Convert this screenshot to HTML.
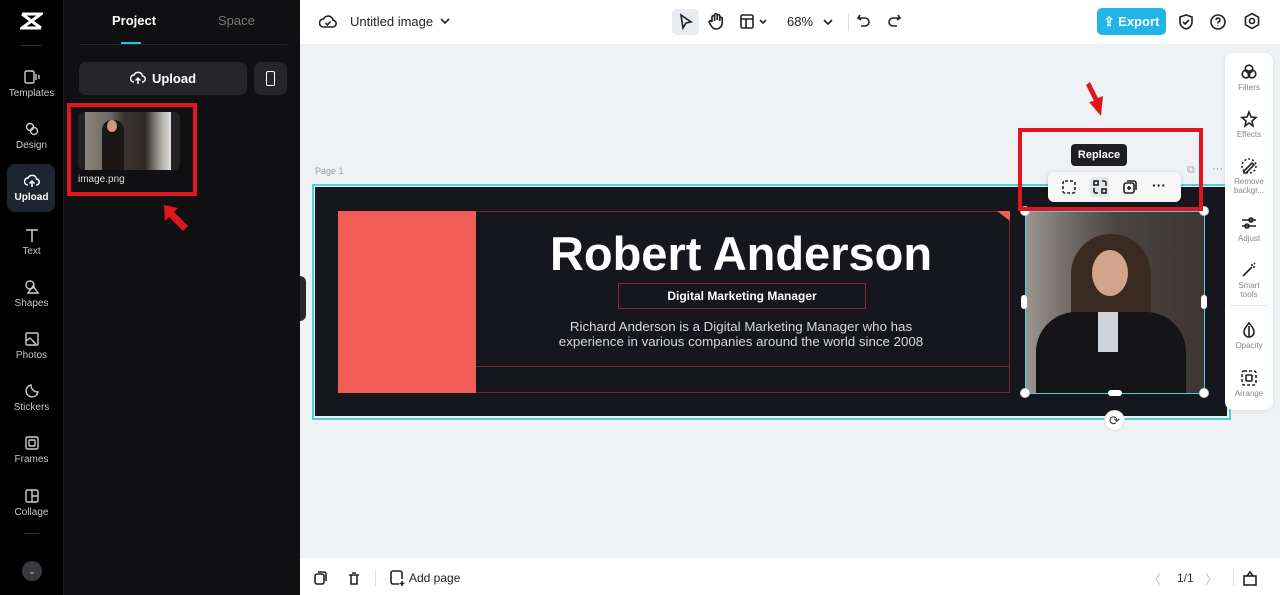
<!DOCTYPE html>
<html><head><meta charset="utf-8"><style>
*{margin:0;padding:0;box-sizing:border-box}
body{width:1280px;height:595px;overflow:hidden;background:#eff2f5;font-family:"Liberation Sans",sans-serif;position:relative}
.abs{position:absolute}
.nav{left:0;top:0;width:63px;height:595px;background:#000}
.nv{position:absolute;left:0;width:63px;text-align:center;color:#c8c8cc;font-size:10px}
.nv svg{display:block;margin:0 auto 3px}
.panel{left:63px;top:0;width:237px;height:595px;background:#101012;border-left:1px solid #1c1c1e}
.top{left:300px;top:0;width:980px;height:44px;background:#fff}
.bot{left:300px;top:558px;width:980px;height:37px;background:#fff}
.ic{stroke:#222;fill:none;stroke-width:1.6}
.rp{left:1225px;top:53px;width:48px;height:357px;background:#fff;border-radius:8px;box-shadow:0 1px 4px rgba(0,0,0,.08)}
.rp .it{position:absolute;left:0;width:48px;text-align:center;font-size:8px;color:#888;line-height:9px}
.rp svg{display:block;margin:0 auto 2px}
</style></head><body>
<div class="abs nav">
 <svg class="abs" style="left:20px;top:12px" width="23" height="18" viewBox="0 0 23 18"><path d="M2 2h19L2 16h19M2 2l19 14" stroke="#fff" stroke-width="3" fill="none"/></svg>
 <div class="abs" style="left:21px;top:45px;width:21px;height:1px;background:#333"></div>
 <div class="nv" style="top:69px"><svg width="16" height="16" viewBox="0 0 16 16"><rect x="1" y="2" width="9" height="12" rx="1.5" stroke="#ccc" fill="none" stroke-width="1.4"/><path d="M12 5v6M15 6v4" stroke="#ccc" stroke-width="1.4"/></svg>Templates</div>
 <div class="nv" style="top:121px"><svg width="16" height="16" viewBox="0 0 16 16"><circle cx="6" cy="6" r="3.5" stroke="#ccc" fill="none" stroke-width="1.4"/><circle cx="10" cy="10" r="3.5" stroke="#ccc" fill="none" stroke-width="1.4"/></svg>Design</div>
 <div class="abs" style="left:7px;top:164px;width:48px;height:48px;background:#1d2530;border-radius:8px"></div>
 <div class="nv" style="top:173px;color:#fff;font-weight:bold"><svg width="16" height="16" viewBox="0 0 16 16"><path d="M4 12a3.5 3.5 0 0 1 0-7 4.5 4.5 0 0 1 8.5 1A3 3 0 0 1 12 12M8 14V8M5.5 10.5 8 8l2.5 2.5" stroke="#fff" fill="none" stroke-width="1.5"/></svg>Upload</div>
 <div class="nv" style="top:227px"><svg width="16" height="16" viewBox="0 0 16 16"><path d="M2 3h12M8 3v12" stroke="#ccc" stroke-width="1.5"/></svg>Text</div>
 <div class="nv" style="top:279px"><svg width="16" height="16" viewBox="0 0 16 16"><circle cx="6" cy="6" r="4" stroke="#ccc" fill="none" stroke-width="1.4"/><path d="M9 7l5 7H4z" stroke="#ccc" fill="none" stroke-width="1.4"/></svg>Shapes</div>
 <div class="nv" style="top:331px"><svg width="16" height="16" viewBox="0 0 16 16"><rect x="2" y="2" width="12" height="12" rx="1" stroke="#ccc" fill="none" stroke-width="1.4"/><path d="M2 10l4-3 6 6" stroke="#ccc" fill="none" stroke-width="1.3"/></svg>Photos</div>
 <div class="nv" style="top:383px"><svg width="16" height="16" viewBox="0 0 16 16"><path d="M14 9A6 6 0 1 1 7 2c0 4 3 7 7 7z" stroke="#ccc" fill="none" stroke-width="1.4"/></svg>Stickers</div>
 <div class="nv" style="top:435px"><svg width="16" height="16" viewBox="0 0 16 16"><rect x="2" y="2" width="12" height="12" rx="1.5" stroke="#ccc" fill="none" stroke-width="1.4"/><rect x="5" y="5" width="6" height="6" rx="1" stroke="#ccc" fill="none" stroke-width="1.4"/></svg>Frames</div>
 <div class="nv" style="top:488px"><svg width="16" height="16" viewBox="0 0 16 16"><rect x="2" y="2" width="12" height="12" rx="1.5" stroke="#ccc" fill="none" stroke-width="1.4"/><path d="M8 2v12M8 8h6" stroke="#ccc" stroke-width="1.4"/></svg>Collage</div>
 <div class="abs" style="left:24px;top:533px;width:15px;height:1px;background:#333"></div>
 <div class="abs" style="left:22px;top:561px;width:20px;height:20px;border-radius:50%;background:#3a3a3e;color:#ccc;font-size:9px;text-align:center;line-height:20px">⌄</div>
</div>
<div class="abs panel">
 <div class="abs" style="left:48px;top:13px;color:#fff;font-weight:bold;font-size:13px">Project</div>
 <div class="abs" style="left:154px;top:13px;color:#777;font-size:13px">Space</div>
 <div class="abs" style="left:57px;top:42px;width:20px;height:2px;background:#22c6da"></div>
 <div class="abs" style="left:15px;top:44px;width:208px;height:1px;background:#26262a"></div>
 <div class="abs" style="left:15px;top:62px;width:168px;height:33px;background:#26262a;border-radius:7px;color:#fff;font-weight:bold;font-size:13px;text-align:center;line-height:33px"><svg style="vertical-align:-3px;margin-right:6px" width="16" height="16" viewBox="0 0 16 16"><path d="M4 12a3.5 3.5 0 0 1 0-7 4.5 4.5 0 0 1 8.5 1A3 3 0 0 1 12 12M8 14V8M5.5 10.5 8 8l2.5 2.5" stroke="#fff" fill="none" stroke-width="1.5"/></svg>Upload</div>
 <div class="abs" style="left:190px;top:62px;width:33px;height:33px;background:#26262a;border-radius:7px"><div class="abs" style="left:12px;top:9px;width:9px;height:15px;border:1.5px solid #fff;border-radius:2px"></div></div>
 <div class="abs" style="left:14px;top:112px;width:102px;height:58px;background:#222;border-radius:6px;overflow:hidden">
  <div class="abs" style="left:7px;top:0;width:86px;height:58px;background:linear-gradient(90deg,#8a8580 0,#6d6660 30%,#3a3432 45%,#2e2a28 70%,#b8b4ae 90%,#ddd 100%)"></div>
  <div class="abs" style="left:24px;top:8px;width:22px;height:50px;background:#1a1716;border-radius:10px 10px 0 0"></div>
  <div class="abs" style="left:29px;top:8px;width:10px;height:12px;background:#c99a82;border-radius:50%"></div>
 </div>
 <div class="abs" style="left:14px;top:174px;color:#ddd;font-size:10px">image.png</div>
 <div class="abs" style="left:3px;top:103px;width:130px;height:93px;border:4px solid #e0151d"></div>
 <svg class="abs" style="left:98px;top:203px" width="30" height="38" viewBox="0 0 30 38"><path d="M2 2l14 3-4 4 14 14-5 5L7 14l-4 4z" fill="#e0151d"/></svg>
 <div class="abs" style="left:236px;top:276px;width:6px;height:45px;background:#2a2a2e;border-radius:0 6px 6px 0"></div>
</div>
<div class="abs top">
 <svg class="abs" style="left:19px;top:13px" width="18" height="18" viewBox="0 0 18 18"><path d="M4.5 14a4 4 0 0 1 0-8 5 5 0 0 1 9.5 1.2A3.4 3.4 0 0 1 13.5 14z" class="ic"/><path d="M6.5 10l2 2 3-3.5" class="ic"/></svg>
 <div class="abs" style="left:50px;top:14px;font-size:13px;color:#222">Untitled image</div>
 <svg class="abs" style="left:140px;top:17px" width="10" height="8"><path d="M1 2l4 4 4-4" class="ic"/></svg>
 <div class="abs" style="left:372px;top:9px;width:27px;height:26px;background:#e8ebef;border-radius:5px"></div>
 <svg class="abs" style="left:378px;top:13px" width="16" height="18"><path d="M3 2l10 7-5 1-3 5z" class="ic"/></svg>
 <svg class="abs" style="left:407px;top:12px" width="18" height="18"><path d="M5 10V5a1.3 1.3 0 0 1 2.6 0V9M7.6 8V3a1.3 1.3 0 0 1 2.6 0V8M10.2 8V4a1.3 1.3 0 0 1 2.6 0v5M12.8 9V6.5a1.2 1.2 0 0 1 2.4 0V11a6 6 0 0 1-6 6C6 17 5 15 3 12l-1-2a1.2 1.2 0 0 1 2-1l1 1" class="ic" stroke-width="1.3"/></svg>
 <svg class="abs" style="left:440px;top:14px" width="30" height="16"><rect x="1" y="1" width="12" height="13" rx="1.5" class="ic"/><path d="M1 5h12M6 5v9" class="ic"/><path d="M20 6l3 3 3-3" class="ic" stroke-width="1.3"/></svg>
 <div class="abs" style="left:487px;top:14px;font-size:13px;color:#222">68%</div>
 <svg class="abs" style="left:523px;top:18px" width="10" height="8"><path d="M1 2l4 4 4-4" class="ic"/></svg>
 <div class="abs" style="left:548px;top:13px;width:1px;height:18px;background:#ddd"></div>
 <svg class="abs" style="left:556px;top:13px" width="16" height="16"><path d="M4 2L2 5l3 2M2 5h7a4 4 0 0 1 0 8H5" class="ic"/></svg>
 <svg class="abs" style="left:586px;top:13px" width="16" height="16"><path d="M12 2l2 3-3 2M14 5H7a4 4 0 0 0 0 8h4" class="ic" stroke="#ccc"/></svg>
 <div class="abs" style="left:797px;top:8px;width:69px;height:27px;background:#21b5e8;border-radius:5px;color:#fff;font-weight:bold;font-size:13px;line-height:27px;text-align:center">⇪ Export</div>
 <svg class="abs" style="left:877px;top:13px" width="18" height="18"><path d="M9 2l6 2v5c0 4-3 6-6 7-3-1-6-3-6-7V4z" class="ic"/><path d="M6 9l2 2 4-4" class="ic"/></svg>
 <svg class="abs" style="left:909px;top:13px" width="18" height="18"><circle cx="9" cy="9" r="7" class="ic"/><path d="M7 7a2 2 0 1 1 2.5 2c-.5.2-.5.6-.5 1.5M9 12.5v.5" class="ic"/></svg>
 <svg class="abs" style="left:943px;top:12px" width="18" height="18"><path d="M9 1.5l6.5 3.7v7.6L9 16.5l-6.5-3.7V5.2z" class="ic"/><circle cx="9" cy="9" r="2.5" class="ic"/></svg>
</div>
<!-- canvas -->
<div class="abs" style="left:315px;top:166px;font-size:9px;color:#999">Page 1</div>
<div class="abs" style="left:312px;top:184px;width:919px;height:236px;border:2px solid #44d2e0"></div>
<div class="abs" style="left:315px;top:187px;width:912px;height:229px;background:#16171c"></div>
<div class="abs" style="left:338px;top:211px;width:138px;height:182px;background:#f25d57"></div>
<div class="abs" style="left:476px;top:211px;width:534px;height:182px;border:1px solid #6b2a2e;border-left:none"></div>
<div class="abs" style="left:476px;top:366px;width:534px;height:1px;background:#6b2a2e"></div>
<svg class="abs" style="left:997px;top:211px" width="13" height="10"><path d="M0 0h13v10z" fill="#f25d57"/></svg>
<div class="abs" style="left:441px;top:226px;width:600px;text-align:center;color:#fff;font-weight:bold;font-size:47px;letter-spacing:0px">Robert Anderson</div>
<div class="abs" style="left:618px;top:283px;width:248px;height:26px;border:1px solid #7a2e33;color:#fff;font-weight:bold;font-size:12px;text-align:center;line-height:24px">Digital Marketing Manager</div>
<div class="abs" style="left:441px;top:319px;width:600px;text-align:center;color:#d8d8d8;font-size:13.3px;line-height:15px">Richard Anderson is a Digital Marketing Manager who has<br>experience in various companies around the world since 2008</div>
<!-- photo -->
<div class="abs" style="left:1025px;top:211px;width:180px;height:183px;overflow:hidden;background:linear-gradient(90deg,#9a9590 0,#6f6a66 25%,#4d4541 50%,#3e3532 100%);border:1.5px solid #44d2e0">
 <div class="abs" style="left:45px;top:22px;width:80px;height:170px;background:#3a2a22;border-radius:40px 40px 0 0"></div>
 <div class="abs" style="left:66px;top:38px;width:36px;height:46px;background:#d2a48c;border-radius:50%"></div>
 <div class="abs" style="left:10px;top:100px;width:150px;height:90px;background:#151416;border-radius:40px 40px 0 0"></div>
 <div class="abs" style="left:72px;top:100px;width:20px;height:40px;background:#cfd3dc"></div>
</div>
<div class="abs" style="left:1020px;top:206px;width:10px;height:10px;border-radius:50%;background:#fff;border:1px solid #ccc"></div>
<div class="abs" style="left:1199px;top:206px;width:10px;height:10px;border-radius:50%;background:#fff;border:1px solid #ccc"></div>
<div class="abs" style="left:1020px;top:388px;width:10px;height:10px;border-radius:50%;background:#fff;border:1px solid #ccc"></div>
<div class="abs" style="left:1199px;top:388px;width:10px;height:10px;border-radius:50%;background:#fff;border:1px solid #ccc"></div>
<div class="abs" style="left:1021px;top:295px;width:6px;height:14px;border-radius:3px;background:#fff"></div>
<div class="abs" style="left:1201px;top:295px;width:6px;height:14px;border-radius:3px;background:#fff"></div>
<div class="abs" style="left:1108px;top:390px;width:14px;height:6px;border-radius:3px;background:#fff"></div>
<div class="abs" style="left:1104px;top:410px;width:21px;height:21px;border-radius:50%;background:#fff;border:1px solid #ddd;font-size:13px;text-align:center;line-height:19px;color:#333">⟳</div>
<div class="abs" style="left:1187px;top:164px;font-size:11px;color:#aaa">⧉</div>
<div class="abs" style="left:1212px;top:163px;font-size:11px;color:#888">···</div>
<!-- toolbar -->
<div class="abs" style="left:1071px;top:144px;width:56px;height:22px;background:#1f1f23;border-radius:4px;color:#fff;font-weight:bold;font-size:11px;text-align:center;line-height:22px">Replace</div>
<div class="abs" style="left:1048px;top:172px;width:133px;height:30px;background:#f7f7f7;border-radius:6px;box-shadow:0 1px 4px rgba(0,0,0,.2)"></div>
<div class="abs" style="left:1090px;top:177px;width:19px;height:20px;background:#e3e6ea;border-radius:3px"></div>
<svg class="abs" style="left:1061px;top:179px" width="16" height="16"><rect x="2" y="2" width="12" height="12" rx="2" class="ic" stroke-dasharray="3 2"/></svg>
<svg class="abs" style="left:1092px;top:179px" width="16" height="16"><rect x="2" y="2" width="4" height="4" class="ic" stroke-width="1.3"/><rect x="10" y="10" width="4" height="4" class="ic" stroke-width="1.3"/><path d="M10 2h2a2 2 0 0 1 2 2v3M6 14H4a2 2 0 0 1-2-2V9" class="ic" stroke-width="1.3"/></svg>
<svg class="abs" style="left:1122px;top:179px" width="16" height="16"><rect x="2" y="4" width="10" height="10" rx="2" class="ic"/><path d="M5 2h7a2 2 0 0 1 2 2v7M7 7v4M5 9h4" class="ic"/></svg>
<div class="abs" style="left:1152px;top:177px;font-size:14px;font-weight:bold;color:#222">···</div>
<div class="abs" style="left:1018px;top:128px;width:185px;height:83px;border:4px solid #e0151d"></div>
<svg class="abs" style="left:1086px;top:80px" width="24" height="40" viewBox="0 0 24 40"><path d="M4 2l8 16 5-2-2 20-12-14 5-1L0 5z" fill="#e0151d"/></svg>
<!-- right panel -->
<div class="abs rp">
 <div class="it" style="top:10px"><svg width="18" height="18"><circle cx="9" cy="6" r="3.8" class="ic" stroke-width="1.3"/><circle cx="6" cy="11" r="3.8" class="ic" stroke-width="1.3"/><circle cx="12" cy="11" r="3.8" class="ic" stroke-width="1.3"/></svg>Filters</div>
 <div class="it" style="top:57px"><svg width="18" height="18"><path d="M9 2l2 5 5 .5-4 3.5 1 5-4-3-4 3 1-5-4-3.5 5-.5z" class="ic" stroke-width="1.3"/></svg>Effects</div>
 <div class="it" style="top:104px"><svg width="18" height="18"><path d="M4 14l8-8 2 2-8 8H4z" class="ic" stroke-width="1.3"/><circle cx="9" cy="9" r="7" class="ic" stroke-width="1" stroke-dasharray="2 2"/></svg>Remove<br>backgr...</div>
 <div class="it" style="top:161px"><svg width="18" height="18"><path d="M2 6h14M2 12h14" class="ic" stroke-width="1.3"/><circle cx="11" cy="6" r="2" fill="#fff" class="ic" stroke-width="1.3"/><circle cx="7" cy="12" r="2" fill="#fff" class="ic" stroke-width="1.3"/></svg>Adjust</div>
 <div class="it" style="top:208px"><svg width="18" height="18"><path d="M3 15l9-9M12 3v2M15 6h-2M14 2l1 1" class="ic" stroke-width="1.3"/></svg>Smart<br>tools</div>
 <div class="abs" style="left:5px;top:252px;width:38px;height:1px;background:#e5e5e5"></div>
 <div class="it" style="top:268px"><svg width="18" height="18"><path d="M9 2c3 4 5 6 5 9a5 5 0 0 1-10 0c0-3 2-5 5-9z" class="ic" stroke-width="1.3"/><path d="M9 5v11" class="ic" stroke-width="1.3"/></svg>Opacity</div>
 <div class="it" style="top:316px"><svg width="18" height="18"><rect x="2" y="2" width="14" height="14" rx="2" class="ic" stroke-width="1.3" stroke-dasharray="3 2"/><rect x="6" y="6" width="6" height="6" rx="1" class="ic" stroke-width="1.3"/></svg>Arrange</div>
</div>
<div class="abs bot">
 <svg class="abs" style="left:13px;top:12px" width="16" height="16"><rect x="2" y="4" width="9" height="10" rx="2" class="ic"/><path d="M5 2h6a2 2 0 0 1 2 2v7" class="ic"/></svg>
 <svg class="abs" style="left:46px;top:12px" width="16" height="16"><path d="M3 5h10M5 5v9h6V5M6 3h4" class="ic" stroke="#ccc"/></svg>
 <div class="abs" style="left:75px;top:12px;width:1px;height:16px;background:#ddd"></div>
 <svg class="abs" style="left:89px;top:11px" width="16" height="18"><path d="M10 15H4a2 2 0 0 1-2-2V4a2 2 0 0 1 2-2h7a2 2 0 0 1 2 2v6M13 12v5M10.5 14.5h5" class="ic"/></svg>
 <div class="abs" style="left:109px;top:13px;font-size:12px;color:#222">Add page</div>
 <div class="abs" style="left:848px;top:11px;font-size:13px;color:#bbb">〈</div>
 <div class="abs" style="left:877px;top:13px;font-size:12px;color:#333">1/1</div>
 <div class="abs" style="left:905px;top:11px;font-size:13px;color:#bbb">〉</div>
 <div class="abs" style="left:933px;top:12px;width:1px;height:16px;background:#ddd"></div>
 <svg class="abs" style="left:942px;top:11px" width="16" height="18"><rect x="2" y="7" width="12" height="9" class="ic"/><path d="M5 7l3-4 3 4" class="ic"/></svg>
</div>
</body></html>
